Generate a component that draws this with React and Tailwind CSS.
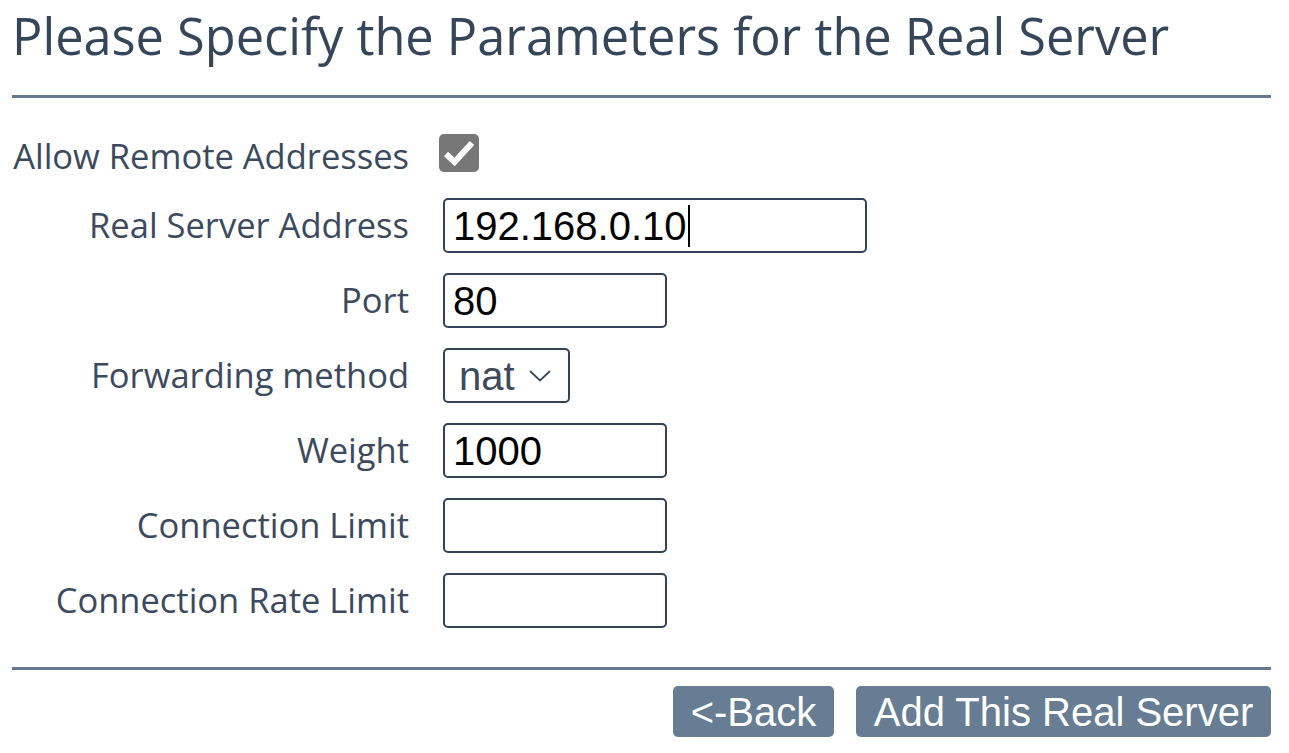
import React from "react";

const labelCls = "text-right text-[34.5px] leading-none text-[#3b4a5e] pr-[34px]";
const boxCls =
  "h-[55px] border-2 border-[#334257] rounded-[5px] bg-white px-[8px] text-[40px] text-black outline-none font-['Liberation_Sans',Arial,sans-serif]";

function Row({ label, children }) {
  return (
    <>
      <div className={labelCls}>{label}</div>
      <div className="flex items-center">{children}</div>
    </>
  );
}

export default function App() {
  return (
    <div className="min-h-screen bg-white pl-3 pr-[18px] font-['Open_Sans','Noto_Sans',sans-serif]">
      <h1 className="pt-[6px] text-[50.5px] leading-[60px] text-[#36465a]">
        Please Specify the Parameters for the Real Server
      </h1>
      <div className="mt-[29px] h-[3px] bg-[#64798f]" />

      <div className="mt-[36px] grid grid-cols-[431px_auto] items-center gap-y-[20px]">
        <Row label="Allow Remote Addresses">
          <div className="ml-[-4px] mb-[6px] flex h-[38px] w-[40px] items-center justify-center rounded-[5px] bg-[#777777]">
            <svg width="32" height="28" viewBox="0 0 32 28">
              <path d="M3 15 L11.5 23 L29 4" fill="none" stroke="white" strokeWidth="6" strokeLinejoin="miter" />
            </svg>
          </div>
        </Row>
        <Row label="Real Server Address">
          <div className={`${boxCls} flex w-[424px] items-center`}>
            <span>192.168.0.10</span>
            <span className="ml-[1px] h-[42px] w-[2px] bg-black" />
          </div>
        </Row>
        <Row label="Port">
          <input className={`${boxCls} w-[224px]`} defaultValue="80" readOnly />
        </Row>
        <Row label="Forwarding method">
          <div className="flex h-[55px] w-[127px] items-center rounded-[5px] border-2 border-[#334257] bg-white pl-[14px] font-['Liberation_Sans',Arial,sans-serif] text-[40px] text-[#3b4a5e]">
            <span>nat</span>
            <svg className="ml-[14px]" width="22" height="12" viewBox="0 0 22 12">
              <path d="M1 1 L11 10.5 L21 1" fill="none" stroke="#3b4a5e" strokeWidth="1.8" />
            </svg>
          </div>
        </Row>
        <Row label="Weight">
          <input className={`${boxCls} w-[224px]`} defaultValue="1000" readOnly />
        </Row>
        <Row label="Connection Limit">
          <input className={`${boxCls} w-[224px]`} defaultValue="" readOnly />
        </Row>
        <Row label="Connection Rate Limit">
          <input className={`${boxCls} w-[224px]`} defaultValue="" readOnly />
        </Row>
      </div>

      <div className="mt-[39px] h-[3px] bg-[#64798f]" />

      <div className="mt-[16px] flex justify-end gap-[22px] font-['Liberation_Sans',Arial,sans-serif]">
        <button className="h-[51px] w-[161px] rounded-[5px] bg-[#667d93] text-[40px] leading-none text-white">
          &lt;-Back
        </button>
        <button className="h-[51px] w-[415px] rounded-[5px] bg-[#667d93] text-[40px] leading-none text-white">
          Add This Real Server
        </button>
      </div>
    </div>
  );
}
